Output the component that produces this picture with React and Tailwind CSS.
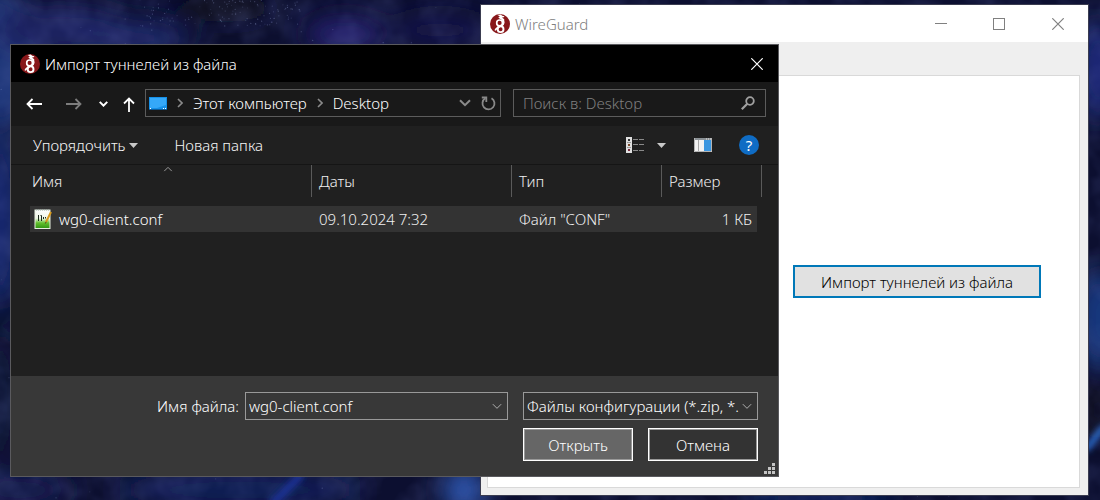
const stars = Array.from({ length: 420 }, (_, i) => {
  const a = Math.abs(Math.sin(i * 12.9898) * 43758.5453) % 1;
  const b = Math.abs(Math.sin(i * 78.233) * 24634.6345) % 1;
  const c = Math.abs(Math.sin(i * 39.425) * 13758.1253) % 1;
  if (i < 120) return { x: 140 + a * 160, y: b * 26, o: 0.12 + c * 0.25 };
  return { x: a * 1100, y: b * 500, o: 0.1 + c * 0.3 };
});

function Wallpaper() {
  return (
    <svg
      aria-hidden="true"
      className="absolute inset-0 h-full w-full"
      viewBox="0 0 1100 500"
      preserveAspectRatio="none"
    >
      <defs>
        <filter id="soft" x="-50%" y="-50%" width="200%" height="200%">
          <feGaussianBlur stdDeviation="12" />
        </filter>
        <filter id="thin" x="-50%" y="-50%" width="200%" height="200%">
          <feGaussianBlur stdDeviation="3" />
        </filter>
        <filter id="clouds" x="0" y="0" width="100%" height="100%">
          <feTurbulence type="fractalNoise" baseFrequency="0.03" numOctaves="3" seed="7" />
          <feColorMatrix values="0 0 0 0 0.12  0 0 0 0 0.15  0 0 0 0 0.42  1.6 0 0 0 -0.6" />
        </filter>
      </defs>
      <rect width="1100" height="500" fill="#0c0f30" />
      <g filter="url(#soft)">
        <ellipse cx="0" cy="60" rx="40" ry="70" fill="#1a3478" />
        <ellipse cx="60" cy="30" rx="70" ry="25" fill="#1b2460" />
        <ellipse cx="130" cy="38" rx="60" ry="18" fill="#1f2566" />
        <ellipse cx="225" cy="8" rx="50" ry="14" fill="#080a1c" />
        <ellipse cx="345" cy="34" rx="40" ry="16" fill="#262272" />
        <ellipse cx="440" cy="30" rx="50" ry="16" fill="#17174a" />
        <ellipse cx="0" cy="220" rx="20" ry="90" fill="#182a72" />
        <ellipse cx="0" cy="400" rx="20" ry="70" fill="#0c1238" />
        <ellipse cx="20" cy="490" rx="50" ry="20" fill="#171c50" />
        <ellipse cx="240" cy="490" rx="120" ry="20" fill="#101b55" />
        <ellipse cx="464" cy="490" rx="22" ry="24" fill="#2f55ac" />
        <ellipse cx="1098" cy="70" rx="20" ry="50" fill="#1b2c7c" />
        <ellipse cx="1100" cy="320" rx="24" ry="50" fill="#17397f" />
        <ellipse cx="1098" cy="410" rx="20" ry="30" fill="#090b20" />
        <ellipse cx="820" cy="498" rx="80" ry="10" fill="#10276b" />
      </g>
      <rect width="1100" height="500" filter="url(#clouds)" opacity="0.3" />
      <path d="M272 504L302 474" stroke="#1c349a" strokeWidth="7" filter="url(#thin)" />
      <path d="M1086 450L1104 426" stroke="#2f72d8" strokeWidth="6" filter="url(#thin)" />
      {stars.map((s, i) => (
        <circle key={i} cx={s.x} cy={s.y} r="0.6" fill="#a9b8ec" opacity={s.o} />
      ))}
    </svg>
  );
}

function Logo() {
  return (
    <svg className="size-5 shrink-0" viewBox="0 0 20 20" aria-hidden="true">
      <circle cx="10" cy="10" r="10" fill="#88171a" />
      <path d="M7.500 0.900L10.800 0.400L12.200 1.700L14.400 2.300L13.800 3.300L12 3.400L14.300 5.200L14 6.800L12.200 6.200L9.500 4.600L8.300 3.400L9.800 2.600L8.800 1.700Z" fill="#fff" />
      <g fill="none" stroke="#fff">
        <circle cx="9.600" cy="8.900" r="2.900" strokeWidth="1.700" />
        <circle cx="10.600" cy="15.200" r="2.900" strokeWidth="1.900" />
        <path d="M12.200 5.500C14.600 7 14.400 10 11.800 11.600C9 13 6.300 13 5.200 16.500" strokeWidth="1.500" />
      </g>
    </svg>
  );
}

function Chevron({ className }) {
  return (
    <svg className={className} viewBox="0 0 12 8" fill="none" stroke="currentColor" aria-hidden="true">
      <path d="M1 1.2L6 6.2L11 1.2" vectorEffect="non-scaling-stroke" />
    </svg>
  );
}

function Cross() {
  return (
    <svg className="size-3" viewBox="0 0 12 12" stroke="currentColor" aria-hidden="true">
      <path d="M0.3 0.3L11.7 11.7M11.7 0.3L0.3 11.7" strokeWidth="1.2" />
    </svg>
  );
}

function Crumb() {
  return (
    <svg className="h-2.5 w-1.5 shrink-0 text-[#8a8a8a]" viewBox="0 0 6 10" fill="none" stroke="currentColor" strokeWidth="1.6" aria-hidden="true">
      <path d="M1 1L5 5L1 9" />
    </svg>
  );
}

function Triangle() {
  return (
    <svg className="h-[5px] w-[9px]" viewBox="0 0 9 5" fill="#c8c8c8" aria-hidden="true">
      <path d="M0 0H9L4.500 5Z" />
    </svg>
  );
}

function MainWindow() {
  return (
    <section
      aria-label="WireGuard"
      className="absolute bottom-1 left-[480px] right-[11px] top-1 flex flex-col border border-[#3a3c50] bg-[#efefef] text-black"
    >
      <header className="flex h-[37px] shrink-0 items-center gap-[5px] bg-white pl-[9px] text-[#808080]">
        <Logo />
        <h1>WireGuard</h1>
        <div className="ml-auto flex h-full">
          <button aria-label="Свернуть" className="flex w-[58px] items-center justify-center">
            <svg className="size-3" viewBox="0 0 12 12" stroke="currentColor" aria-hidden="true">
              <path d="M0 5.500H12" />
            </svg>
          </button>
          <button aria-label="Развернуть" className="flex w-[58px] items-center justify-center">
            <svg className="size-3" viewBox="0 0 12 12" fill="none" stroke="currentColor" aria-hidden="true">
              <rect x="0.5" y="0.5" width="11" height="11" />
            </svg>
          </button>
          <button aria-label="Закрыть" className="flex w-[60px] items-center justify-center">
            <Cross />
          </button>
        </div>
      </header>
      <div className="mb-[7px] ml-1.5 mr-2 mt-[33px] flex grow items-center justify-end border border-[#d9d9d9] bg-white pr-[38px]">
        <button className="h-[33px] w-[248px] border-2 border-[#0078b8] bg-[#e1e1e1]">
          Импорт туннелей из файла
        </button>
      </div>
    </section>
  );
}

function NavBar() {
  return (
    <div className="flex h-11 items-center bg-[#191919] pl-[15px] pr-3 text-white">
      <button aria-label="Назад" className="mr-6">
        <svg className="h-3 w-4" viewBox="0 0 16 12" fill="none" stroke="currentColor" strokeWidth="1.8" aria-hidden="true">
          <path d="M16 6H1.500M6.500 1L1.500 6L6.500 11" />
        </svg>
      </button>
      <button aria-label="Вперёд" className="mr-[17px] text-[#7d7d7d]">
        <svg className="h-3 w-4" viewBox="0 0 16 12" fill="none" stroke="currentColor" strokeWidth="1.8" aria-hidden="true">
          <path d="M0 6H14.500M9.500 1L14.500 6L9.500 11" />
        </svg>
      </button>
      <button aria-label="Последние расположения" className="mr-[15px]">
        <Chevron className="h-1.5 w-[9px] stroke-2" />
      </button>
      <button aria-label="Вверх" className="mr-2.5">
        <svg className="h-[15px] w-3" viewBox="0 0 12 15" fill="none" stroke="currentColor" strokeWidth="1.8" aria-hidden="true">
          <path d="M6 15V1.500M1 6.500L6 1.500L11 6.500" />
        </svg>
      </button>
      <nav aria-label="Адрес" className="mb-0.5 flex h-7 min-w-0 grow items-center border border-[#5c5c5c] pl-[3px] pr-1">
        <svg className="mr-2.5 h-[13px] w-[18px] shrink-0" viewBox="0 0 18 13" aria-hidden="true">
          <rect width="18" height="13" fill="#1590e8" />
          <path d="M1 1H17V8L8 11H1Z" fill="#35a8f8" />
          <path d="M0 12.500H18" stroke="#0a5c9c" />
          <path d="M1 11.500H2M14 11.500H15M16 11.500H17" stroke="#fff" />
        </svg>
        <Crumb />
        <button className="mx-2.5 whitespace-nowrap">Этот компьютер</button>
        <Crumb />
        <button className="ml-2.5">Desktop</button>
        <button aria-label="Предыдущие расположения" className="ml-auto mr-2.5 text-[#8a8a8a]">
          <Chevron className="h-2 w-3 stroke-2" />
        </button>
        <button aria-label="Обновить" className="text-[#8a8a8a]">
          <svg className="size-[15px]" viewBox="0 0 15 15" fill="none" stroke="currentColor" strokeWidth="1.8" aria-hidden="true">
            <path d="M10.500 2.200A6 6 0 1 1 4.300 2.300" />
            <path d="M0.800 1.500H5.300V6" />
          </svg>
        </button>
      </nav>
      <label className="mb-0.5 ml-3 flex h-7 w-[253px] items-center border border-[#5c5c5c] pl-[9px] pr-2.5">
        <input
          type="search"
          aria-label="Поиск в: Desktop"
          placeholder="Поиск в: Desktop"
          className="min-w-0 grow bg-transparent outline-none placeholder:text-[#808080]"
        />
        <svg className="size-3.5 shrink-0 text-[#a0a0a0]" viewBox="0 0 14 14" fill="none" stroke="currentColor" strokeWidth="1.8" aria-hidden="true">
          <circle cx="9" cy="5" r="3.800" />
          <path d="M6.300 7.700L0.800 13.200" strokeWidth="2.200" />
        </svg>
      </label>
    </div>
  );
}

function Toolbar() {
  return (
    <div className="flex h-[39px] items-center border-b border-[#151515] bg-[#202020] pl-[22px] pr-[19px] text-[#f6f6f6]">
      <button className="mr-9 flex items-center gap-1">
        Упорядочить
        <Triangle />
      </button>
      <button>Новая папка</button>
      <button aria-label="Представление" className="ml-auto">
        <svg className="h-4 w-[19px]" viewBox="0 0 19 16" aria-hidden="true">
          <path d="M0 0H6V16H0Z" fill="#e0e0e0" />
          <path d="M1 5.500H5M1 10.500H5" stroke="#888" strokeWidth="0.8" />
          <rect x="2" y="2" width="2" height="2" fill="#333" />
          <rect x="2" y="7" width="2" height="2" fill="#7a4a2a" />
          <rect x="2" y="12" width="2" height="2" fill="#7a2a3a" />
          <path d="M7 2.500H12M13 2.500H18M7 7.500H12M13 7.500H18M7 13.500H12M13 13.500H18" stroke="#8a8a8a" />
        </svg>
      </button>
      <button aria-label="Другие представления" className="ml-3 mr-7">
        <Triangle />
      </button>
      <button aria-label="Область просмотра" className="mr-[27px]">
        <svg className="h-3.5 w-[18px]" viewBox="0 0 18 14" aria-hidden="true">
          <rect width="18" height="14" fill="#f2f2f2" />
          <rect width="18" height="2" fill="#8c9296" />
          <path d="M12 1H13M14 1H15M16 1H17" stroke="#e8e8e8" />
          <path d="M4.500 2V14" stroke="#a8a8a8" />
          <rect x="10" y="2" width="7" height="11" fill="#3a96e0" />
          <path d="M0.500 0V13.500H17.500V0" fill="none" stroke="#b4b4b4" />
        </svg>
      </button>
      <button aria-label="Справка" className="flex size-5 items-center justify-center rounded-full bg-[#0f6cc4] font-normal leading-none text-white">
        ?
      </button>
    </div>
  );
}

const columns = ["Даты", "Тип", "Размер"];

function FileList() {
  return (
    <div className="min-h-[211px] bg-[#202020] pl-[19px] pr-4 text-[#f0f0f0]">
      <table className="w-full table-fixed border-collapse text-left">
        <colgroup>
          <col />
          <col className="w-[200px]" />
          <col className="w-[150px]" />
          <col className="w-[95px]" />
          <col className="w-[5px]" />
        </colgroup>
        <thead>
          <tr>
            <th aria-sort="ascending" className="p-0 pb-[9px] font-light">
              <div className="relative flex h-8 items-center border-r border-[#5a5a5a] pl-0.5">
                <Chevron className="absolute left-[133px] top-px h-1.5 w-2.5 rotate-180 text-[#9a9a9a]" />
                <button>Имя</button>
              </div>
            </th>
            {columns.map((name, i) => (
              <th key={name} colSpan={i === 2 ? 2 : 1} className="p-0 pb-[9px] font-light">
                <div className="flex h-8 items-center border-r border-[#5a5a5a] pl-[7px]">
                  <button>{name}</button>
                </div>
              </th>
            ))}
          </tr>
        </thead>
        <tbody>
          <tr className="h-[26px]">
            <td className="bg-[#333333] p-0 pl-1 text-white">
              <div className="flex items-center gap-[7px]">
                <svg className="h-5 w-[18px]" viewBox="0 0 18 20" aria-hidden="true">
                  <defs>
                    <linearGradient id="page" x1="0" y1="0" x2="0" y2="1">
                      <stop offset="0" stopColor="#fdfdfd" />
                      <stop offset="0.45" stopColor="#eef6e6" />
                      <stop offset="0.7" stopColor="#62c02c" />
                      <stop offset="1" stopColor="#2f9412" />
                    </linearGradient>
                  </defs>
                  <rect x="1" y="1" width="15" height="18.500" fill="url(#page)" stroke="#e8f0e0" />
                  <path d="M2 1H15" stroke="#9aa" strokeDasharray="1 1" />
                  <path d="M4.500 12V6M6.500 6.500H7.500V12M9.500 10V8M11.500 9.500V8" fill="none" stroke="#1c2a1c" />
                  <path d="M12 13L17 3" stroke="#d89a1c" strokeWidth="2" />
                  <path d="M11.400 14.500L12.200 12.800" stroke="#5a3a10" />
                </svg>
                wg0-client.conf
              </div>
            </td>
            <td className="bg-[#333333] p-0 pl-[7px]">09.10.2024 7:32</td>
            <td className="bg-[#333333] p-0 pl-[7px]">Файл "CONF"</td>
            <td className="bg-[#333333] p-0 pr-[5px] text-right">1 КБ</td>
            <td className="p-0" />
          </tr>
        </tbody>
      </table>
    </div>
  );
}

function Footer() {
  return (
    <div className="relative flex flex-col gap-2 bg-[#383838] pb-[15px] pl-5 pr-5 pt-4 text-white">
      <div className="flex h-7 items-stretch">
        <label htmlFor="file-name" className="ml-auto mr-1.5 self-center">
          Имя файла:
        </label>
        <div className="flex w-[263px] items-center border border-[#999999] pl-[3px] pr-[5px]">
          <input id="file-name" defaultValue="wg0-client.conf" className="min-w-0 grow bg-transparent outline-none" />
          <button aria-label="Показать список имён">
            <Chevron className="h-[7px] w-2.5 text-[#b0b0b0]" />
          </button>
        </div>
        <div className="relative ml-[15px] w-[235px]">
          <select aria-label="Тип файлов" className="h-full w-full appearance-none border border-[#999999] bg-[#333333] pl-[3px] pr-4 outline-none">
            <option>Файлы конфигурации (*.zip, *.</option>
          </select>
          <Chevron className="pointer-events-none absolute right-[6px] top-[11px] h-[7px] w-2.5 text-[#b0b0b0]" />
        </div>
      </div>
      <div className="flex justify-end gap-[15px]">
        <button className="h-[33px] w-[110px] border border-white bg-[#666666] outline outline-1 -outline-offset-2 outline-[#999999]">
          Открыть
        </button>
        <button className="h-[33px] w-[110px] border border-white bg-[#333333] outline outline-1 -outline-offset-2 outline-[#999999]">
          Отмена
        </button>
      </div>
      <svg className="absolute bottom-0.5 right-[3px] size-[11px]" viewBox="0 0 11 11" fill="#c4c4c4" aria-hidden="true">
        <path d="M8 0h3v3h-3zM4 4h3v3h-3zM8 4h3v3h-3zM0 8h3v3h-3zM4 8h3v3h-3zM8 8h3v3h-3z" />
      </svg>
    </div>
  );
}

export default function App() {
  return (
    <main className="relative min-h-screen w-full overflow-hidden bg-[#0d1033] font-['Noto_Sans',sans-serif] text-[15px] font-light leading-5">
      <Wallpaper />
      <MainWindow />
      <section
        role="dialog"
        aria-label="Импорт туннелей из файла"
        className="absolute left-2.5 right-[321px] top-11 flex flex-col border border-[#5a5a5e] bg-[#202020]"
      >
        <header className="flex h-[37px] items-center gap-[5px] bg-black pl-[9px] pr-[15px] text-white">
          <Logo />
          <h2>Импорт туннелей из файла</h2>
          <button aria-label="Закрыть" className="ml-auto">
            <Cross />
          </button>
        </header>
        <NavBar />
        <Toolbar />
        <FileList />
        <Footer />
      </section>
    </main>
  );
}
